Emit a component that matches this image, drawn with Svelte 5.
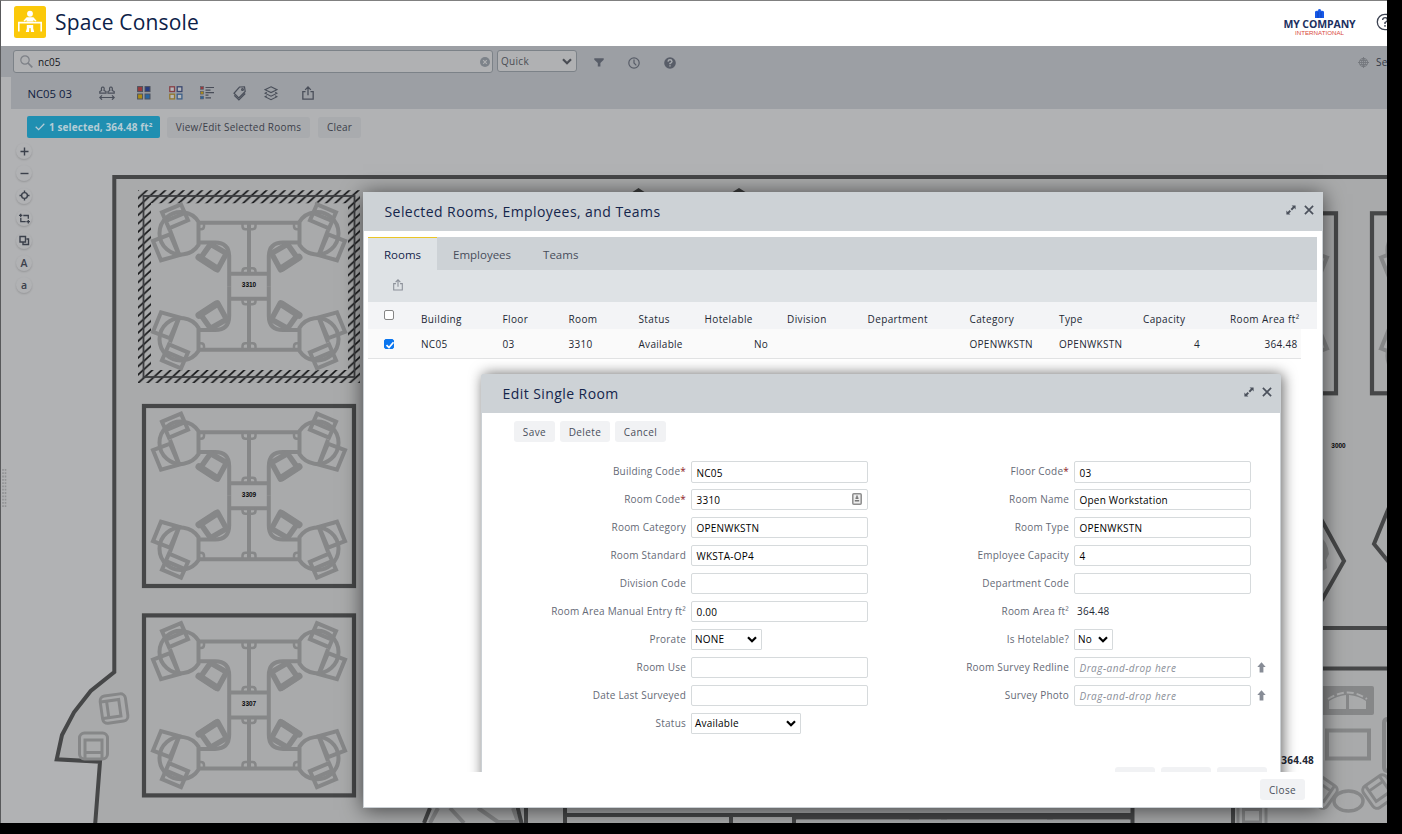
<script>
  const tools = ['plus', 'minus', 'target', 'area', 'copy', 'A', 'a'];
  const rooms = [
    { id: '3310', x: 249, y: 286.3, selected: true },
    { id: '3309', x: 249, y: 495.7 },
    { id: '3307', x: 249, y: 705.1 },
    { id: '', x: 1231, y: 303 },
    { id: '', x: 1477, y: 303 }
  ];
  const headers = ['Building', 'Floor', 'Room', 'Status', 'Hotelable', 'Division', 'Department', 'Category', 'Type', 'Capacity', 'Room Area ft²'];
  const cells = ['NC05', '03', '3310', 'Available', 'No', '', '', 'OPENWKSTN', 'OPENWKSTN', '4', '364.48'];
  const left = [
    { label: 'Building Code', req: true, value: 'NC05' },
    { label: 'Room Code', req: true, value: '3310', badge: true },
    { label: 'Room Category', value: 'OPENWKSTN' },
    { label: 'Room Standard', value: 'WKSTA-OP4' },
    { label: 'Division Code', value: '' },
    { label: 'Room Area Manual Entry ft²', value: '0.00' },
    { label: 'Prorate', value: 'NONE', select: 71 },
    { label: 'Room Use', value: '' },
    { label: 'Date Last Surveyed', value: '' },
    { label: 'Status', value: 'Available', select: 110 }
  ];
  const right = [
    { label: 'Floor Code', req: true, value: '03' },
    { label: 'Room Name', value: 'Open Workstation' },
    { label: 'Room Type', value: 'OPENWKSTN' },
    { label: 'Employee Capacity', value: '4' },
    { label: 'Department Code', value: '' },
    { label: 'Room Area ft²', value: '364.48', plain: true },
    { label: 'Is Hotelable?', value: 'No', select: 39 },
    { label: 'Room Survey Redline', value: 'Drag-and-drop here', drop: true },
    { label: 'Survey Photo', value: 'Drag-and-drop here', drop: true }
  ];
</script>

{#snippet chevron()}
  <svg class="chev" width="10" height="7" viewBox="0 0 10 7"><path d="M1 1.2 5 5.2 9 1.2" fill="none" stroke="currentColor" stroke-width="2.2" /></svg>
{/snippet}

{#snippet share(size)}
  <svg width={size} height={size * 15 / 13} viewBox="0 0 13 15" fill="none" stroke="currentColor" stroke-width="1.4">
    <path d="M3.8 6H.9v8.2h11.2V6H9.2M6.5 10V1.4M3.4 4.2 6.5 1.1 9.6 4.2" />
  </svg>
{/snippet}

{#snippet windowIcons()}
  <span class="win">
    <svg width="10" height="10" viewBox="0 0 10 10"><path d="M5.6.4h4v4L8.3 3.100 6 5.400 4.600 4 6.900 1.700ZM4.400 9.600h-4v-4L1.700 6.900 3.600 5 5 6.400 3.100 8.300Z" fill="#4b515c" /></svg>
    <svg width="10" height="10" viewBox="0 0 10 10"><path d="M.9.9 9.100 9.100M9.100.9.9 9.100" stroke="#4b515c" stroke-width="1.700" /></svg>
  </span>
{/snippet}

{#snippet field(f)}
  <div class="field">
    <span class="label">{f.label}{#if f.req}<i class="req">*</i>{/if}</span>
    {#if f.plain}
      <span class="plain">{f.value}</span>
    {:else if f.select}
      <span class="select" style="width:{f.select}px">{f.value}{@render chevron()}</span>
    {:else}
      <span class="input" class:drop={f.drop}>{f.value}
        {#if f.badge}
          <svg class="badge" width="10" height="12" viewBox="0 0 10 12"><rect x=".8" y=".8" width="8.400" height="10.400" rx="1" fill="#eee" stroke="#8d8d8d" stroke-width="1.500" /><path d="M5 2.500v3M3.500 5.200h3M2.800 7.800h4.400" stroke="#777" stroke-width="1.500" /></svg>
        {/if}
      </span>
      {#if f.drop}
        <svg class="up" width="9" height="11" viewBox="0 0 9 11"><path d="M4.500.2 8.700 5H6.400v5.500H2.600V5H.3Z" fill="#878c96" /></svg>
      {/if}
    {/if}
  </div>
{/snippet}

<div class="screen">
  <div class="app">
    <header>
      <svg class="logo" width="32" height="32" viewBox="0 0 32 32">
        <rect width="32" height="32" rx="2.500" fill="#fbc90a" />
        <ellipse cx="16" cy="7.700" rx="2.900" ry="3" fill="#fff" />
        <path d="M9.500 14.700 12.600 11.300h6.800l3.100 3.400-.9.800-2.200-1.500v1.500h-6.800v-1.500l-2.200 1.500Z" fill="#fff" />
        <path d="M4.800 25.500v-8.900h22.400v8.900" fill="none" stroke="#fff" stroke-width="1.600" />
        <path d="M12.800 19h6.400v3.500l1 3.500h-3.200l-.4-4h-1.200l-.4 4h-3.200l1-3.500Z" fill="#fff" />
      </svg>
      <h1>Space Console</h1>
      <div class="company">
        <svg width="9" height="9" viewBox="0 0 9 9"><path d="M0 2.500 2.300 1.500 3 2.300 3.200.5 4.500 0 5.800.5 6 2.300 6.700 1.500 9 2.500V9H0Z" fill="#1658e8" /><path d="M3 3v6M6 3v6" stroke="#0837a0" stroke-width=".6" /></svg>
        <b>MY COMPANY</b>
        <span>INTERNATIONAL</span>
      </div>
      <svg class="help" width="18" height="18" viewBox="0 0 18 18"><circle cx="9" cy="9" r="7.700" fill="none" stroke="#3d4352" stroke-width="1.300" /><path d="M6.600 7q.2-2.400 2.500-2.400T11.500 6.900Q11.500 8.100 9 9.600v1.300M9 12v1.700" fill="none" stroke="#3d4352" stroke-width="1.400" /></svg>
    </header>

    <div class="bar search-row">
      <div class="search">
        <svg width="13" height="13" viewBox="0 0 13 13" fill="none" stroke="#7d8087"><circle cx="5" cy="5" r="4.200" stroke-width="1.200" /><path d="m8 8 4.300 4.300" stroke-width="1.700" /></svg>
        <span>nc05</span>
        <svg class="clear" width="10" height="10" viewBox="0 0 10 10"><circle cx="5" cy="5" r="5" fill="#7c8289" /><path d="m3.200 3.200 3.600 3.600m0-3.600L3.200 6.800" stroke="#b0b1b3" stroke-width="1.200" /></svg>
      </div>
      <div class="quick">Quick{@render chevron()}</div>
      <svg class="ic filter" width="10" height="9" viewBox="0 0 10 9"><path d="M.3.300h9.400v1.500L6.400 5v3.500H3.800V5L.3 1.800Z" fill="#585d68" /></svg>
      <svg class="ic clock" width="12" height="12" viewBox="0 0 12 12" fill="none" stroke="#585d68" stroke-width="1.200"><circle cx="6" cy="6" r="5.200" /><path d="M6 2.500V6l2.300 2.300" /></svg>
      <svg class="ic q" width="12" height="12" viewBox="0 0 12 12"><circle cx="6" cy="6" r="5.800" fill="#585d68" /><path d="M4 4.600Q4.200 2.800 6 2.800T8 4.500Q8 5.500 6 6.500v.8M6 8.200v1.400" fill="none" stroke="#a9acb0" stroke-width="1.400" /></svg>
      <svg class="globe" width="11" height="11" viewBox="0 0 11 11" fill="none" stroke="#74777d" stroke-width=".9"><circle cx="5.500" cy="5.500" r="4.100" /><ellipse cx="5.500" cy="5.500" rx="2" ry="4.100" /><path d="M5.500 0v11M0 5.500h11M2 3.500h7M2 7.500h7" /></svg>
      <span class="settings">Settings</span>
    </div>

    <div class="bar tool-row">
      <span class="floor">NC05 03</span>
      <svg class="t1" width="16" height="14" viewBox="0 0 16 14" fill="none" stroke="#4a4f5a" stroke-width="1.200"><path d="M.8 7.200V5.600L2.600 4.400Q1.900 1 3.800 1T5 4.400L7 5.600v1.600ZM9 7.200V5.600l1.800-1.200Q10 1 11.900 1t1.300 3.400L15.200 5.600v1.600ZM.8 11.500h14.400M3 9.300.8 11.500 3 13.700M13 9.300l2.200 2.200-2.200 2.200" /></svg>
      <svg class="t2" width="14" height="14" viewBox="0 0 14 14" stroke="#4d525d"><rect x=".6" y=".6" width="5" height="5" fill="#9b393b" /><rect x="8" y=".6" width="5" height="5" fill="#263b80" /><rect x=".6" y="8" width="5" height="5" fill="#ae8c12" /><rect x="8" y="8" width="5" height="5" fill="#2865a0" /></svg>
      <svg class="t3" width="14" height="14" viewBox="0 0 14 14" fill="#b5b7ba"><g stroke-width="1.300"><rect x=".8" y=".8" width="4.700" height="4.700" stroke="#873f45" /><rect x="8.200" y=".8" width="4.700" height="4.700" stroke="#39466f" /><rect x=".8" y="8.200" width="4.700" height="4.700" stroke="#92772d" /><rect x="8.200" y="8.200" width="4.700" height="4.700" stroke="#3d6089" /></g></svg>
      <svg class="t4" width="14" height="14" viewBox="0 0 14 14"><g stroke="#5c5f68" stroke-width=".7"><rect x=".4" y=".6" width="3.200" height="2.700" fill="#9b393b" /><rect x=".4" y="5.400" width="3.200" height="2.700" fill="#ae8c12" /><rect x=".4" y="10.200" width="3.200" height="2.700" fill="#2865a0" /></g><path d="M5.500 1.500H14M5.500 4.200h5M5.500 6.700H14M5.500 9.200h3M5.500 11.800H11" stroke="#484d58" stroke-width="1.200" /></svg>
      <svg class="t5" width="13" height="15" viewBox="0 0 13 15" fill="none" stroke="#4a4f5a" stroke-width="1.200"><path d="M6.500 1 11.500.8 12.200 5.500 5.800 12 1 7.300ZM1.200 9.300 5.900 14 12.200 7.500" /><circle cx="9.500" cy="3.500" r=".9" /></svg>
      <svg class="t6" width="14" height="15" viewBox="0 0 14 15" fill="none" stroke="#4a4f5a" stroke-width="1.100"><path d="m7 .8 6 2.900-6 2.900-6-2.900ZM2.800 6.200 1 7.200l6 3 6-3-1.800-1M2.800 9.700 1 10.700l6 3 6-3-1.800-1" /></svg>
      <span class="t7">{@render share(12)}</span>
    </div>

    <main>
      <svg class="plan" width="1387" height="714" viewBox="0 109 1387 714">
        <defs>
          <pattern id="hatch" width="9.200" height="8.400" patternUnits="userSpaceOnUse" x="138" y="190">
            <path d="M-2 10.230 11.200-1.830M-2 1.830 2-1.830M7.200 10.230l4-3.660" stroke="#17181a" stroke-width="1.700" />
          </pattern>
          <g id="armchair" fill="none" stroke-width="3">
            <rect x="-14" y="-12.500" width="28" height="26" rx="5" />
            <path d="M-8.500 13V-5.500h17V13M-8.500 7h17" />
          </g>
          <g id="quarter" fill="none" stroke="#868788" stroke-width="4">
            <path d="M-50.500-63.500H0M-50.500-64.500A21.200 21.200 0 1 0-50.500-41.500ZM-50.500-43.800H-34Q-19.800-43.800-19.800-29.500V0M0-63.500V-12.500M-20-12.500H0" />
            <path d="M-6.500-63v3q0 3 3 3h3.500M-6.500-13v-2q0-3 3-3h3.500M-50-57h2q3 0 3-3v-3" stroke-width="2.500" />
            <path d="M-38.500-42.200-22.500-33-31.500-16.500-48.500-28Z" stroke-width="5.500" stroke-linejoin="round" />
            <path d="M-50-29-33-18" stroke-width="7" stroke-linecap="round" />
            <path d="M-87-74-68-82-61-66-80-58ZM-83-65.500-64-73.500M-96-45.500-79-52-70-31-88-26ZM-79-56-70-32" />
          </g>
          <g id="cluster">
            <use href="#quarter" /><use href="#quarter" transform="scale(-1 1)" />
            <use href="#quarter" transform="scale(1 -1)" /><use href="#quarter" transform="scale(-1 -1)" />
          </g>
        </defs>
        <path d="M1395 177H114.300V672L90.700 691 74 712.300 62 735 56.700 759.300 100 761.700 94.700 830H1395Z" fill="#a9aaab" stroke="#464748" stroke-width="4" />
        {#each rooms as r}
          {#if r.selected}
            <path d="M138 190.300H360V383H138ZM151 203.300V370H348V203.300Z" fill="url(#hatch)" fill-rule="evenodd" />
            <rect x="143.500" y="196" width="211" height="181" fill="none" stroke="#3c3d40" stroke-width="1.800" />
          {:else}
            <rect x={r.x - 105} y={r.y - 89.700} width="210" height="180" fill="none" stroke="#464748" stroke-width="4.200" />
          {/if}
          <use href="#cluster" x={r.x} y={r.y} />
          <text x={r.x} y={r.y + 1} text-anchor="middle">{r.id}</text>
        {/each}
        <g stroke="#868788">
          <use href="#armchair" transform="translate(114.500 708.500) rotate(82) scale(.98)" />
          <use href="#armchair" transform="translate(93.500 745.500)" />
          <use href="#armchair" transform="translate(1380 792) rotate(145)" />
          <use href="#armchair" transform="translate(1320 792) rotate(-145)" />
          <use href="#armchair" transform="translate(1252 815)" />
          <path d="M1310 688h62v25h-62Z" fill="#868788" stroke-width="4" stroke-linejoin="round" />
          <path d="M1329 709v-8q8-5 17-6v14Zm20 0v-14q10 1 17 6v8Z" fill="#a9aaab" stroke="none" />
          <path d="M1328 699q20-13 39 0" fill="none" stroke="#a9aaab" stroke-width="2" stroke-dasharray="7 3" />
          <rect x="1327" y="730.500" width="42" height="28" fill="none" stroke-width="4" />
          <ellipse cx="1348.500" cy="801" rx="14.500" ry="10" fill="none" stroke-width="3.500" />
          <path d="M1388 719q-4 0-4 4v44q0 4 4 4M430 823l8-15M450 808l14 15M478 808l20 14h20l-5-14" fill="none" stroke-width="4" />
          <path d="M1318 534q10 8 11 20l-3 6 1 8-9 6Z" fill="#868788" stroke="none" />
        </g>
        <g fill="none" stroke="#464748" stroke-width="4">
          <path d="M1315 508 1344 561 1315 612M1392 500 1374 544 1392 566M1320 628H1390M1320 668.500H1390" />
          <path d="M1233 805v20M1132.500 805v20M517 805l5 20M526 805v20M430 808l-6 15M565 805v18M565 815H1132M731 817v8M794 817v8" />
          <path d="M796 818H1132" stroke-width="3" />
        </g>
        <path d="M631 193 638.500 188 646 193ZM731 193 739 188 747 193Z" fill="#3b3c3d" />
        <path d="M569 821h158M735 821h55M797 821.500h112M919 821.500h22M947 821.500h100M1053 821.500h76" stroke="#a9aaab" stroke-width="3.500" />
        <text x="1338.500" y="448" text-anchor="middle">3000</text>
        <path d="M3 469v38M5.500 469v38" stroke="#929395" stroke-width="1.600" stroke-dasharray="1.800 1.500" />
      </svg>

      <div class="selection">
        <span class="chip"><svg width="10" height="8" viewBox="0 0 10 8"><path d="M.7 3.700 3.600 6.600 9.300.8" fill="none" stroke="#b7ccd6" stroke-width="1.300" /></svg>1 selected, 364.48 ft²</span>
        <span class="gbtn wide">View/Edit Selected Rooms</span>
        <span class="gbtn">Clear</span>
      </div>

      <div class="zoom">
        {#each tools as t}
          <span>
            {#if t.length === 1}{t}{:else}
              <svg width="11" height="11" viewBox="0 0 11 11" fill="none" stroke="#3b404b" stroke-width="1.400">
                {#if t === 'plus'}<path d="M5.500 1.500v8M1.500 5.500h8" />
                {:else if t === 'minus'}<path d="M1.500 5.500h8" />
                {:else if t === 'target'}<circle cx="5.500" cy="5.500" r="2.900" /><path d="M5.500.5v2M5.500 8.500v2M.5 5.500h2M8.500 5.500h2" />
                {:else if t === 'area'}<path d="M4.300 2.500h5v3.300M6.700 8.700H1.800V4.700M0 2.400h3.400M1.700.7v3.400M7.400 8.700H11M9.300 7v3.400" stroke-width="1.300" />
                {:else}<path d="M1 1.500h5.500V7H1ZM4 7.500v2h5.500V4H7.500" />{/if}
              </svg>
            {/if}
          </span>
        {/each}
      </div>
    </main>

    <section class="modal">
      <div class="mhead"><h2>Selected Rooms, Employees, and Teams</h2>{@render windowIcons()}</div>
      <div class="mbody">
        <nav><span class="tab on">Rooms</span><span class="tab">Employees</span><span class="tab">Teams</span></nav>
        <div class="mtools">{@render share(10)}</div>
        <div class="grid ghead">
          <span class="cb"></span>
          {#each headers as h}<span>{h}</span>{/each}
        </div>
        <div class="grid grow">
          <span class="cb on"><svg width="10" height="10" viewBox="0 0 10 10"><path d="M1.500 5.200 4 7.600 8.500 2.200" fill="none" stroke="#fff" stroke-width="1.700" /></svg></span>
          {#each cells as c, i}<span class:num={i === 4 || i === 9 || i === 10}>{c}</span>{/each}
        </div>
        <div class="total">364.48</div>

        <div class="dialog">
          <div class="mhead"><h2>Edit Single Room</h2>{@render windowIcons()}</div>
          <div class="actions"><span class="btn b1">Save</span><span class="btn b2">Delete</span><span class="btn b3">Cancel</span></div>
          <div class="form">
            <div class="col">{#each left as f}{@render field(f)}{/each}</div>
            <div class="col">{#each right as f}{@render field(f)}{/each}</div>
          </div>
          <div class="lower"><i></i><i></i><i></i></div>
        </div>
      </div>
      <footer><span class="btn">Close</span></footer>
    </section>
  </div>
</div>

<style>
  :global(body) { margin: 0; background: #000; }
  .screen { width: 1402px; height: 834px; background: #000; overflow: hidden; font-family: 'Open Sans', sans-serif; font-size: 10px; letter-spacing: .22px; color: #222733; }
  .screen *, .screen { box-sizing: border-box; }
  svg { display: block; flex: none; }
  i { font-style: normal; }
  h1, h2 { margin: 0; font-weight: 400; }
  .app { position: relative; width: 1387px; height: 823px; overflow: hidden; background: #b1b2b4; display: flex; flex-direction: column; border-left: 1px solid #58595b; border-top: 1px solid #808080; }
  header { height: 45px; flex: none; background: #fff; display: flex; align-items: center; padding-left: 13px; white-space: nowrap; }
  .logo { margin-top: -3px; }
  h1 { flex: none; font-size: 21px; letter-spacing: .16px; color: #0c2148; margin-left: 9px; margin-top: -3px; width: 150px; }
  .company { flex: none; margin-left: 1078.500px; width: 72px; height: 29px; display: flex; flex-direction: column; align-items: center; color: #1c305f; margin-top: -1px; }
  .company b { font-size: 10.500px; letter-spacing: -.1px; line-height: 12px; margin-top: 0; }
  .company span { font: 6.200px/7px 'Liberation Sans', sans-serif; color: #d94a40; letter-spacing: 0; margin-top: -1px; }
  .help { margin-left: 20.500px; margin-top: -3px; }
  .bar { background: #9c9fa4; display: flex; align-items: center; flex: none; overflow: hidden; }
  .search-row { height: 31px; padding-left: 12px; }
  .search { flex: none; width: 480px; height: 23px; border: 1px solid #7c8288; border-radius: 3px; background: #b0b1b3; display: flex; align-items: center; padding: 0 2px 0 6px; color: #15171c; font-size: 10px; letter-spacing: 0; }
  .search span { margin-left: 5px; flex: 1; }
  .quick { flex: none; width: 80px; height: 22px; margin-left: 4px; margin-top: -1px; border: 1px solid #7c8288; border-radius: 3px; background: #b0b1b3; color: #4a4d54; letter-spacing: .3px; display: flex; align-items: center; justify-content: space-between; padding: 0 4px 0 3px; }
  .ic { margin-top: 2px; }
  .filter { margin-left: 16.500px; }
  .clock { margin-left: 24px; }
  .q { margin-left: 24px; }
  .globe { margin-left: 682.500px; margin-top: 1px; }
  .settings { margin-left: 7px; color: #343946; white-space: nowrap; margin-top: 1px; }
  .tool-row { height: 32px; margin-left: 10px; padding-left: 17px; color: #10203f; }
  .floor { font-size: 11.300px; letter-spacing: 0; width: 71px; white-space: nowrap; margin-left: -.5px; margin-right: .5px; }
  .t2 { margin-left: 22px; } .t3 { margin-left: 18px; } .t4 { margin-left: 17px; } .t5 { margin-left: 18.500px; }
  .t6 { margin-left: 18.500px; } .t7 { margin-left: 24px; color: #4a4f5a; }
  main { position: relative; flex: 1; }
  .plan { position: absolute; left: -1px; top: 0; }
  .plan text { font: bold 6.500px 'Liberation Sans', sans-serif; letter-spacing: 0; fill: #08090a; }
  .selection { position: absolute; left: 26px; top: 7px; display: flex; align-items: center; gap: 8px; white-space: nowrap; }
  .chip { width: 133px; height: 22px; background: #208fb1; color: #b5cdd6; border-radius: 2px; font-weight: 700; display: flex; align-items: center; gap: 4px; padding-left: 8px; letter-spacing: .1px; }
  .gbtn { width: 43px; height: 21px; background: #a9abae; color: #3c404a; border-radius: 3px; display: grid; place-items: center; margin-left: -1px; letter-spacing: .22px; }
  .wide { width: 143px; }
  .gbtn + .gbtn { margin-left: 0; }
  .zoom { position: absolute; left: 15px; top: 34px; display: flex; flex-direction: column; gap: 6.400px; }
  .zoom span { width: 16px; height: 16px; border-radius: 50%; background: #b1b2b4; box-shadow: 0 1px 2px rgba(0, 0, 0, .16); display: grid; place-items: center; font-size: 10.500px; font-weight: 600; color: #3b404b; letter-spacing: 0; line-height: 14px; }
  .modal { position: absolute; left: 362px; top: 191px; width: 960px; height: 616px; background: #fff; border: 1px solid #cbd0d4; box-shadow: 0 2px 20px rgba(0, 0, 0, .62); display: flex; flex-direction: column; }
  .mhead { height: 39px; background: #cdd2d6; display: flex; align-items: center; justify-content: space-between; padding: 0 9.500px 0 21.500px; margin: -1px -1px 0; flex: none; }
  h2 { font-size: 14px; letter-spacing: .43px; color: #14254b; white-space: nowrap; }
  .win { display: flex; gap: 8px; margin-top: -4px; }
  .mbody { position: relative; height: 541px; flex: none; overflow: hidden; padding: 6px 5px 0 4px; display: flex; flex-direction: column; }
  nav { height: 33px; flex: none; background: #cdd2d6; display: flex; }
  .tab { padding: 0 16px; line-height: 34px; font-size: 11.500px; letter-spacing: 0; color: #474d5a; border-top: 1px solid transparent; }
  .tab.on { width: 69px; background: #dee2e5; border-top-color: #eac526; color: #14254b; }
  .mtools { height: 32px; background: #dee2e5; color: #8b9099; padding: 9px 0 0 25px; flex: none; }
  .grid { display: grid; grid-template-columns: 37px 81.500px 66px 70px 66px 82.500px 80.500px 102px 89.500px 84px 87px 69px; padding-left: 16px; align-items: center; white-space: nowrap; flex: none; }
  .ghead { height: 27px; background: #f3f4f6; padding-top: 6px; letter-spacing: .38px; }
  .grow { height: 30px; width: 933px; background: #fafafa; border-bottom: 1px solid #e2e3e4; letter-spacing: .28px; padding-top: 1px; }
  .cb { width: 10px; height: 10px; border: 1px solid #858585; border-radius: 2px; background: #fff; }
  .ghead .cb { margin-top: -7px; }
  .cb.on { background: #0b76ef; border-color: #0b76ef; display: grid; place-items: center; }
  .num { text-align: right; }
  .num:nth-of-type(6) { padding-right: 19px; }
  .num:nth-of-type(11) { padding-right: 30px; }
  .num:nth-of-type(12) { padding-right: 1.500px; }
  .total { margin-top: auto; text-align: right; font-weight: 700; padding: 0 3px 5px 0; letter-spacing: .2px; }
  .dialog { position: absolute; left: 117px; top: 143px; width: 800px; height: 420px; background: #fff; border: 1px solid #cbd0d4; box-shadow: 2px 0 14px rgba(0, 0, 0, .6); border-radius: 3px 3px 0 0; }
  .dialog .mhead { border-radius: 3px 3px 0 0; }
  .actions { display: flex; gap: 5px; padding: 8px 0 0 32px; }
  .btn { display: grid; place-items: center; height: 21px; border-radius: 3px; background: #f1f2f4; color: #494e5a; letter-spacing: .4px; }
  .b1 { width: 41px; } .b2 { width: 50px; } .b3 { width: 51px; }
  .form { display: flex; padding-top: 15px; }
  .col { width: 383px; }
  .field { height: 28px; display: flex; align-items: center; white-space: nowrap; }
  .label { width: 204px; text-align: right; color: #656a76; margin-right: 5px; flex: none; }
  .req { color: #8e2025; }
  .input { position: relative; flex: none; width: 177px; height: 22px; margin-top: 1px; border: 1px solid #d6dadc; border-radius: 2px; padding-left: 4.500px; line-height: 22px; color: #000; }
  .field:nth-child(n+2) .input { height: 21px; line-height: 21px; }
  .drop { color: #8b8f99; font-style: italic; letter-spacing: .48px; }
  .badge { position: absolute; right: 5px; top: 3px; }
  .up { margin-left: 5.500px; }
  .select { height: 21px; border: 1px solid #d6dadc; border-radius: 1px; padding: 0 4px 0 3px; display: flex; align-items: center; justify-content: space-between; color: #000; flex: none; }
  .plain { margin-left: 3px; }
  .lower { display: flex; justify-content: flex-end; gap: 6px; padding: 30px 13px 0 0; }
  .lower i { width: 50px; height: 21px; border-radius: 3px; background: #f1f2f4; }
  .lower i:first-child { width: 40px; }
  footer { flex: 1; display: flex; justify-content: flex-end; padding: 7px 17px 0 0; }
  footer .btn { width: 45px; }
</style>
